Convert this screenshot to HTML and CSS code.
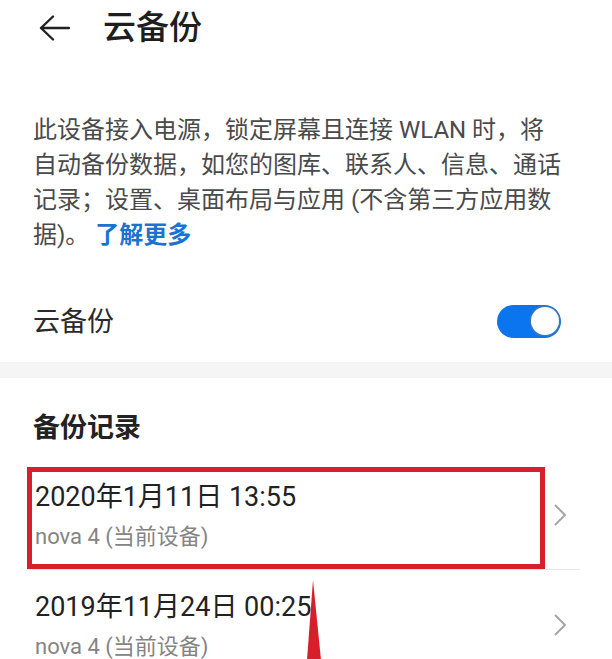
FILE: index.html
```html
<!DOCTYPE html>
<html lang="zh-CN">
<head>
<meta charset="utf-8">
<title>云备份</title>
<link rel="stylesheet" href="styles.css">
</head>
<body>
<div class="page">
  <header class="topbar">
    <svg class="back" width="32" height="26" viewBox="0 0 32 26" aria-hidden="true">
      <path d="M3 13 H31 M15 1.5 L3 13 L15 24.5" fill="none" stroke="#222" stroke-width="2.4" stroke-linecap="round" stroke-linejoin="round"/>
    </svg>
    <h1 class="title">云备份</h1>
  </header>

  <p class="desc">此设备接入电源，锁定屏幕且连接 WLAN 时，将自动备份数据，如您的图库、联系人、信息、通话记录；设置、桌面布局与应用 (不含第三方应用数据)。<a class="more">了解更多</a></p>

  <div class="switch-row">
    <span class="switch-label">云备份</span>
    <span class="toggle"><span class="knob"></span></span>
  </div>

  <div class="band"></div>

  <h2 class="section-title">备份记录</h2>

  <div class="entry first">
    <div class="entry-text">
      <div class="entry-title">2020年1月11日 13:55</div>
      <div class="entry-sub">nova 4 (当前设备)</div>
    </div>
    <svg class="chev" width="14" height="24" viewBox="0 0 14 24" aria-hidden="true">
      <path d="M2 2 L12 12 L2 22" fill="none" stroke="#a6a6a6" stroke-width="2"/>
    </svg>
    <div class="highlight"></div>
  </div>

  <div class="entry">
    <div class="entry-text">
      <div class="entry-title">2019年11月24日 00:25</div>
      <div class="entry-sub">nova 4 (当前设备)</div>
    </div>
    <svg class="chev" width="14" height="24" viewBox="0 0 14 24" aria-hidden="true">
      <path d="M2 2 L12 12 L2 22" fill="none" stroke="#a6a6a6" stroke-width="2"/>
    </svg>
  </div>

  <svg class="pointer" width="16" height="80" viewBox="0 0 16 80" aria-hidden="true">
    <polygon points="7,0 1,80 15,80" fill="#d71f2b"/>
  </svg>
</div>
</body>
</html>
```

FILE: styles.css
```css
html, body {
  margin: 0;
  padding: 0;
  background: #fff;
}
body {
  font-family: Roboto, "Noto Sans CJK SC", "Noto Sans", sans-serif;
  color: #222;
  overflow: hidden;
}
.page {
  position: relative;
  width: 612px;
  height: 659px;
  overflow: hidden;
}
.topbar {
  height: 55px;
  display: flex;
  align-items: center;
  padding-left: 38px;
  gap: 33px;
}
.back {
  display: block;
  flex: none;
}
.title {
  margin: 0;
  font-size: 33px;
  font-weight: 500;
  line-height: 40px;
  color: #1e1e1e;
}
.desc {
  margin: 58px 0 0;
  padding: 0 45px 0 33px;
  font-size: 24px;
  line-height: 35px;
  color: #4a4a4a;
}
.more {
  display: inline-block;
  margin-left: 6px;
  color: #1a73d2;
  font-weight: 600;
}
.switch-row {
  display: flex;
  align-items: center;
  justify-content: space-between;
  padding: 49px 51px 20px 33px;
  height: 40px;
}
.switch-label {
  font-size: 27px;
  line-height: 40px;
  color: #2a2a2a;
}
.toggle {
  width: 64px;
  height: 33px;
  border-radius: 17px;
  background: #0b74ef;
  display: flex;
  align-items: center;
  justify-content: flex-end;
  padding-right: 2px;
  box-sizing: border-box;
  margin-top: -2px;
}
.knob {
  width: 28px;
  height: 28px;
  border-radius: 50%;
  background: #fff;
  box-shadow: 0 0 0 1.5px #3b78b8;
}
.band {
  height: 16px;
  background: #f5f5f5;
}
.section-title {
  margin: 0;
  padding: 32px 33px 14px;
  font-size: 27px;
  line-height: 36px;
  font-weight: 600;
  color: #222;
}
.entry {
  position: relative;
  height: 109px;
  display: flex;
  align-items: center;
  justify-content: space-between;
  padding: 0 45px 0 35px;
}
.entry.first {
  border-bottom: 1px solid #e8e8e8;
  margin: 0 32px 0 27px;
  padding: 0 13px 0 8px;
}
.entry-text {
  align-self: flex-start;
  padding-top: 20px;
}
.entry-title {
  font-size: 27px;
  line-height: 34px;
  color: #222;
}
.entry-sub {
  margin-top: 7px;
  font-size: 22px;
  line-height: 32px;
  color: #848484;
}
.chev {
  display: block;
  flex: none;
}
.highlight {
  position: absolute;
  left: 0;
  top: 7px;
  width: 518px;
  height: 102px;
  box-sizing: border-box;
  border: 5px solid #d8202b;
}
.pointer {
  position: absolute;
  left: 306px;
  top: 580px;
  display: block;
}
```
